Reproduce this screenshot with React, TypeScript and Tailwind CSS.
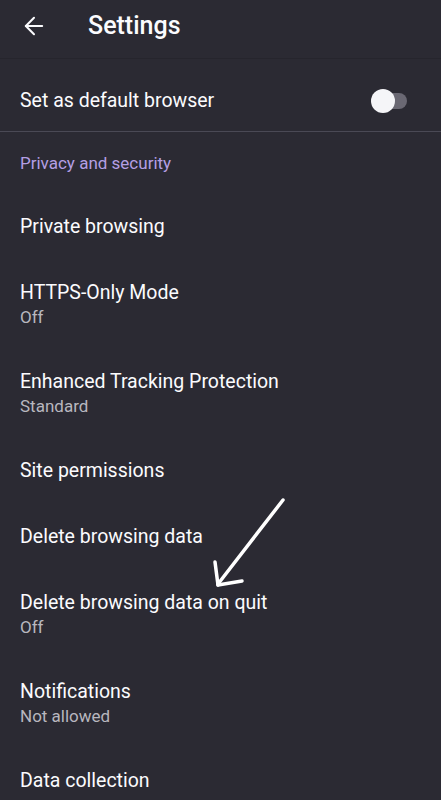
import { ArrowLeft } from 'lucide-react';

type Item = { title: string; sub?: string };

const items: Item[] = [
  { title: 'Private browsing' },
  { title: 'HTTPS-Only Mode', sub: 'Off' },
  { title: 'Enhanced Tracking Protection', sub: 'Standard' },
  { title: 'Site permissions' },
  { title: 'Delete browsing data' },
  { title: 'Delete browsing data on quit', sub: 'Off' },
  { title: 'Notifications', sub: 'Not allowed' },
  { title: 'Data collection' },
];

function Row({ title, sub }: Item) {
  return (
    <div className={`flex flex-col justify-center px-5 pt-[4px] ${sub ? 'h-[89px]' : 'h-[66px]'}`}>
      <div className="text-[19.5px] leading-6 text-[#fbfbfe]">{title}</div>
      {sub && <div className="text-[17px] leading-6 text-[#b8b7bf]">{sub}</div>}
    </div>
  );
}

export default function App() {
  return (
    <div
      className="relative w-[441px] h-[800px] overflow-hidden bg-[#2b2a33]"
      style={{ fontFamily: 'Roboto, "Noto Sans", sans-serif' }}
    >
      {/* Top bar */}
      <div className="flex items-center h-[59px] pb-[7px] border-b border-[#26252d]">
        <div className="w-[88px] flex pl-[20px]">
          <ArrowLeft className="text-[#fbfbfe]" size={28} strokeWidth={1.75} />
        </div>
        <h1 className="text-[25px] font-medium text-[#fbfbfe]">Settings</h1>
      </div>

      {/* Default browser */}
      <div className="flex items-center justify-between h-[73px] pl-5 pr-[34px] border-b border-[#4a4955] pt-3">
        <span className="text-[19.5px] text-[#fbfbfe]">Set as default browser</span>
        <div className="relative w-[32px] h-[16px] rounded-full bg-[#6a6873]">
          <div className="absolute -left-[4px] -top-[4px] w-[24px] h-[24px] rounded-full bg-[#f5f5f8]" />
        </div>
      </div>

      {/* Section header */}
      <div className="h-[60px] flex items-center px-5 pt-[3px]">
        <span className="text-[17px] text-[#b49fe4]">Privacy and security</span>
      </div>

      {items.map((it) => (
        <Row key={it.title} {...it} />
      ))}

      {/* Annotation arrow */}
      <svg className="absolute left-0 top-0 pointer-events-none" width="441" height="800">
        <g stroke="#ffffff" strokeWidth="3.5" strokeLinecap="round" fill="none">
          <line x1="283" y1="500" x2="218" y2="584" />
          <line x1="218" y1="585" x2="215" y2="562" />
          <line x1="218" y1="585" x2="242" y2="581" />
        </g>
      </svg>
    </div>
  );
}
